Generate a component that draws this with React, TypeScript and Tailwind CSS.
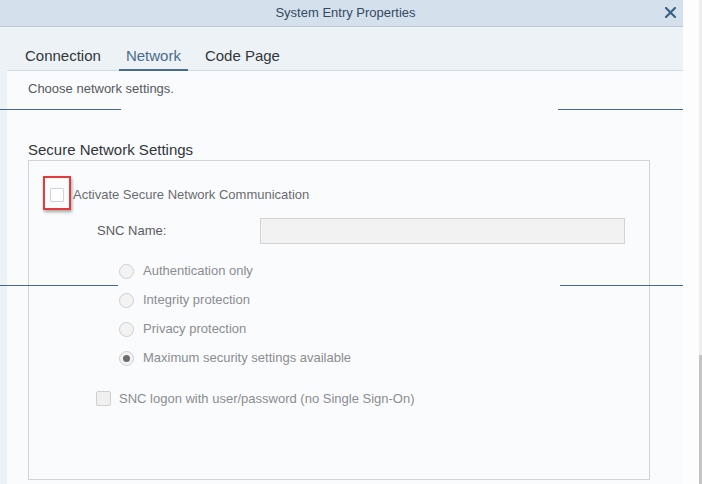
import React from "react";

const font = { fontFamily: '"Liberation Sans", Arial, sans-serif' };

function Radio({ label, checked }: { label: string; checked?: boolean }) {
  return (
    <div className="flex items-center h-[29px]">
      <span className="w-[15px] h-[15px] rounded-full border border-[#cfcfcf] bg-[#f3f3f3] flex items-center justify-center">
        {checked && <span className="w-[7px] h-[7px] rounded-full bg-[#6d6d6d]" />}
      </span>
      <span className="ml-[9px] text-[13px] text-[#8a8d90]">{label}</span>
    </div>
  );
}

export default function App() {
  return (
    <div className="w-[702px] h-[484px] flex overflow-hidden bg-white" style={font}>
      <div className="relative w-[683px] h-full flex flex-col">
        {/* header */}
        <div className="h-[27px] shrink-0 bg-[#d4e1ed] border-b border-[#bcc6cf] relative flex items-center justify-center pl-[8px]">
          <span className="text-[13px] text-[#34495e]">System Entry Properties</span>
          <svg className="absolute left-[665px] top-[7px]" width="11" height="11" viewBox="0 0 11 11">
            <path d="M1 1 L10 10 M10 1 L1 10" stroke="#3a6186" strokeWidth="2.2" strokeLinecap="square" />
          </svg>
        </div>

        {/* tabs */}
        <div className="h-[44px] shrink-0 bg-[#edf2f6] flex items-end">
          <div className="ml-[7px] flex-1 h-[32px] border-b border-[#cfdce8] flex items-stretch pl-[11px] text-[15px]">
            <div className="px-[7px] pt-[4px] flex items-center text-[#32363a]">Connection</div>
            <div className="ml-[11px] px-[7px] pt-[5px] flex items-center text-[#4a6c8c] border-b-2 border-[#4a6c8c] -mb-px">
              Network
            </div>
            <div className="ml-[10px] px-[7px] pt-[4px] flex items-center text-[#32363a]">Code Page</div>
          </div>
        </div>

        {/* body */}
        <div className="flex-1 flex">
          <div className="w-[7px] bg-[#edf2f6]" />
          <div className="flex-1 bg-[#fafbfd] pt-[10px]">
            <p className="ml-[21px] text-[13px] leading-[16px] text-[#555a5f]">Choose network settings.</p>
            <h2 className="ml-[21px] mt-[44px] text-[15px] leading-[18px] text-[#32363a]">Secure Network Settings</h2>
            <div className="relative ml-[21px] mt-[1px] w-[622px] h-[320px] border border-[#d3d3d3]">
              <div className="absolute left-[14px] top-[15px] w-[28px] h-[34px] border-2 border-[#e23b3b] shadow-[1px_2px_3px_rgba(0,0,0,0.35)]" />
              <div className="flex items-center ml-[21px] mt-[24px]">
                <span className="w-[14px] h-[14px] border border-[#d4d4d4] bg-white rounded-[1px]" />
                <span className="ml-[9px] text-[13px] text-[#6a6d70]">Activate Secure Network Communication</span>
              </div>
              <div className="flex items-center mt-[13px] ml-[68px]">
                <span className="w-[163px] text-[13px] text-[#5a5d60]">SNC Name:</span>
                <div className="w-[365px] h-[26px] bg-[#f2f2f2] border border-[#d3d3d3]" />
              </div>
              <div className="ml-[90px] mt-[13px] flex flex-col">
                <Radio label="Authentication only" />
                <Radio label="Integrity protection" />
                <Radio label="Privacy protection" />
                <Radio label="Maximum security settings available" checked />
              </div>
              <div className="flex items-center ml-[67px] mt-[16px]">
                <span className="w-[15px] h-[15px] border border-[#d0d0d0] bg-[#f0f0f0] rounded-[2px]" />
                <span className="ml-[8px] text-[13px] text-[#8a8d90]">SNC logon with user/password (no Single Sign-On)</span>
              </div>
            </div>
          </div>
        </div>

        {/* guide lines */}
        <div className="absolute left-0 top-[109px] w-[121px] h-px bg-[#46698a]" />
        <div className="absolute left-[558px] top-[109px] w-[125px] h-px bg-[#46698a]" />
        <div className="absolute left-0 top-[285px] w-[118px] h-px bg-[#46698a]" />
        <div className="absolute left-[560px] top-[285px] w-[123px] h-px bg-[#46698a]" />
      </div>

      {/* right strip */}
      <div className="flex-1 flex">
        <div className="flex-1 bg-[#fdfdfd]" />
        <div className="w-[3px] flex flex-col">
          <div className="h-[355px] bg-[#eeeeee]" />
          <div className="flex-1 bg-[#c4c4c4]" />
        </div>
      </div>
    </div>
  );
}
